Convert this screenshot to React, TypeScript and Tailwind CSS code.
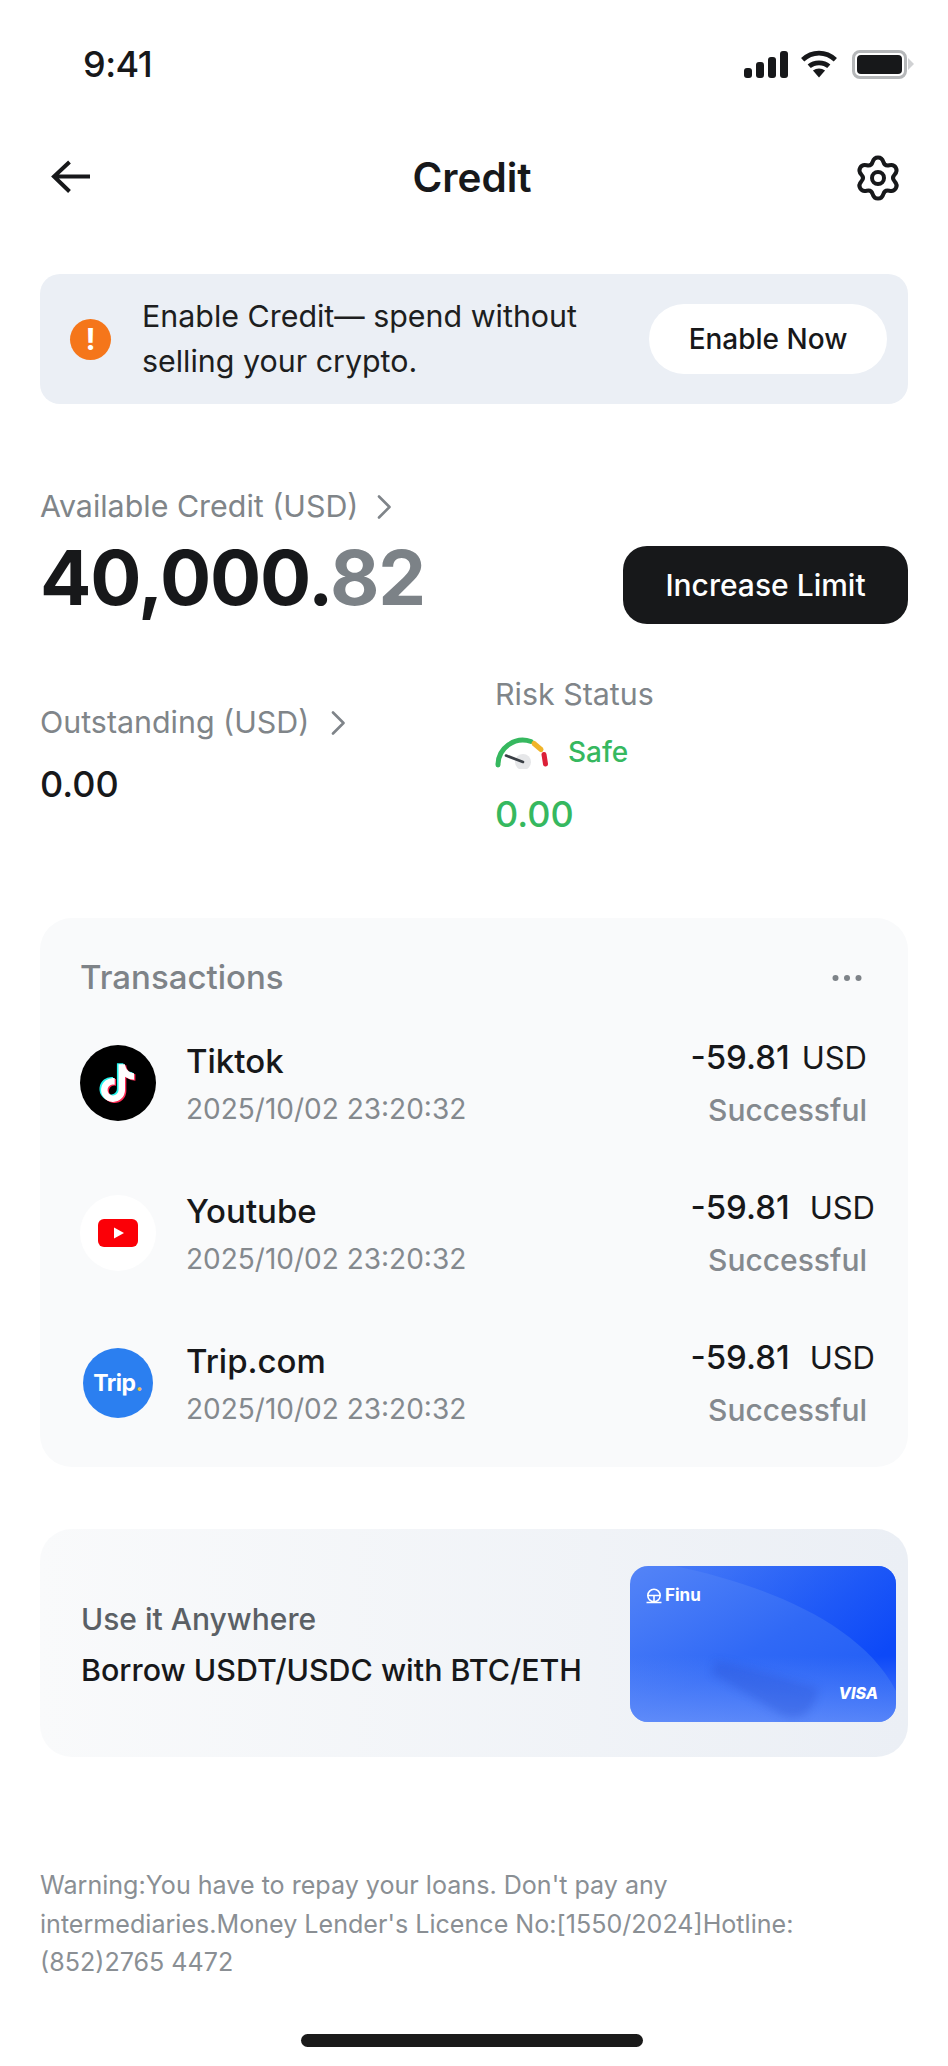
import React from "react";

const tiktokPath =
  "M448,209.91a210.06,210.06,0,0,1-122.77-39.25V349.38A162.55,162.55,0,1,1,185,188.31V278.2a74.62,74.62,0,1,0,52.23,71.18V0l88,0a121.18,121.18,0,0,0,1.86,22.17h0A122.18,122.18,0,0,0,381,102.39a121.43,121.43,0,0,0,67,20.14Z";

// six lobed gear outline: two control points per lobe keep the tips round
const gearPath = (() => {
  const polar = (r: number, deg: number) => {
    const a = (deg * Math.PI) / 180;
    return [23 + r * Math.cos(a), 23 + r * Math.sin(a)];
  };
  const pts: number[][] = [];
  for (let i = 0; i < 6; i++) {
    const c = i * 60 - 90;
    pts.push(polar(21, c - 11), polar(21, c + 11), polar(13.4, c + 30));
  }
  const mid = (a: number[], b: number[]) => [(a[0] + b[0]) / 2, (a[1] + b[1]) / 2];
  const start = mid(pts[pts.length - 1], pts[0]);
  let d = `M${start[0].toFixed(2)} ${start[1].toFixed(2)}`;
  pts.forEach((p, i) => {
    const m = mid(p, pts[(i + 1) % pts.length]);
    d += `Q${p[0].toFixed(2)} ${p[1].toFixed(2)} ${m[0].toFixed(2)} ${m[1].toFixed(2)}`;
  });
  return d + "Z";
})();

const Chevron = () => (
  <svg width="16" height="24" viewBox="0 0 16 24" fill="none" stroke="#7f8489" strokeWidth="2.6" strokeLinecap="round" strokeLinejoin="round">
    <path d="M3 1.5l10.5 10.5L3 22.5" />
  </svg>
);

const StatusIcons = () => (
  <div className="flex items-center">
    <svg width="44" height="27" viewBox="0 0 44 27" fill="#17181a">
      <rect x="0" y="17" width="8" height="10" rx="3" />
      <rect x="12" y="11" width="8" height="16" rx="3" />
      <rect x="24" y="6" width="8" height="21" rx="3" />
      <rect x="36" y="0" width="8" height="27" rx="3" />
    </svg>
    <svg className="ml-[12px]" width="38" height="28" viewBox="0 0 40 30" fill="none" stroke="#17181a" strokeWidth="5">
      <path d="M2.5 10.5C12.5 1 27.5 1 37.5 10.5" />
      <path d="M9.5 17.5C15 12.5 25 12.5 30.5 17.5" />
      <path d="M13.5 22L20 29.5 26.5 22C22.5 19 17.5 19 13.5 22Z" fill="#17181a" stroke="none" />
    </svg>
    <div className="ml-[14px] flex items-center">
      <div className="h-[29px] w-[55px] rounded-[8px] border-[3px] border-[#b5b7b9] p-[2px]">
        <div className="h-full w-full rounded-[4px] bg-[#17181a]" />
      </div>
      <svg className="ml-[1px]" width="6" height="12" viewBox="0 0 6 12" fill="#d0d1d3">
        <path d="M0 0L6 6 0 12Z" />
      </svg>
    </div>
  </div>
);

const Gauge = () => (
  <svg width="56" height="34" viewBox="0 0 56 34" fill="none" strokeLinecap="round">
    <path d="M3 30A25 25 0 0 1 36 6.5" stroke="#36b85f" strokeWidth="5" />
    <path d="M39 8.5L46 14.5" stroke="#f0b429" strokeWidth="5" />
    <path d="M49 19.5L50.5 29" stroke="#dc2038" strokeWidth="5" />
    <circle cx="28" cy="27" r="8" fill="#e6e7e9" />
    <path d="M11 20.5L28 27" stroke="#3a3f45" strokeWidth="2.6" />
  </svg>
);

const TiktokIcon = () => (
  <div className="flex h-[76px] w-[76px] items-center justify-center rounded-full bg-black">
    <svg width="42" height="42" viewBox="-30 -30 520 570">
      <path d={tiktokPath} fill="#25f4ee" transform="translate(-22 -14)" />
      <path d={tiktokPath} fill="#fe2c55" transform="translate(18 14)" />
      <path d={tiktokPath} fill="#ffffff" />
    </svg>
  </div>
);

const YoutubeIcon = () => (
  <div className="flex h-[76px] w-[76px] items-center justify-center rounded-full bg-white">
    <svg width="40" height="28" viewBox="0 0 40 28">
      <rect width="40" height="28" rx="6" fill="#fb0007" />
      <path d="M16 8.5L26 14 16 19.5Z" fill="#ffffff" />
    </svg>
  </div>
);

const TripIcon = () => (
  <div className="flex h-[76px] w-[76px] items-center justify-center">
    <div className="flex h-[70px] w-[70px] items-center justify-center rounded-full bg-[#2b7ff0] pt-[1px]">
      <span className="text-[23px] font-bold tracking-[-0.5px] text-white">
        Trip<span className="text-[#eec04c]">.</span>
      </span>
    </div>
  </div>
);

const rows = [
  { name: "Tiktok", icon: <TiktokIcon />, amountClass: "gap-[12px]" },
  { name: "Youtube", icon: <YoutubeIcon />, amountClass: "gap-[20px] -mr-[8px]" },
  { name: "Trip.com", icon: <TripIcon />, amountClass: "gap-[20px] -mr-[8px]" },
];

const VisaCard = () => (
  <div className="relative mt-[2px] h-[156px] w-[266px] shrink-0 overflow-hidden rounded-[18px] bg-gradient-to-br from-[#5484f7] via-[#3069f6] to-[#1a58f6]">
    <svg className="absolute inset-0" width="266" height="156" viewBox="0 0 266 156" fill="none">
      <defs>
        <linearGradient id="sweep" x1="0" y1="0" x2="1" y2="0.6">
          <stop offset="0" stopColor="#2a63f6" stopOpacity="0.2" />
          <stop offset="1" stopColor="#0d49f8" />
        </linearGradient>
        <linearGradient id="floor" x1="0" y1="0" x2="0" y2="1">
          <stop offset="0" stopColor="#7ea2fb" stopOpacity="0" />
          <stop offset="1" stopColor="#7ea2fb" stopOpacity="0.6" />
        </linearGradient>
        <filter id="soft" x="-20%" y="-20%" width="140%" height="140%">
          <feGaussianBlur stdDeviation="4" />
        </filter>
      </defs>
      <path d="M45 0C130 18 230 55 266 125V0Z" fill="url(#sweep)" />
      <rect x="0" y="90" width="266" height="66" fill="url(#floor)" />
      <path d="M82 108C100 118 130 135 150 148C170 158 185 145 188 122C150 112 110 98 85 95Z" fill="#2c55d6" opacity="0.38" filter="url(#soft)" />
    </svg>
    <div className="relative flex h-full flex-col justify-between pb-[21px] pl-[16px] pr-[18px] pt-[21px]">
      <div className="flex items-center gap-[3px]">
        <svg width="16" height="16" viewBox="0 0 16 16" fill="none" stroke="#ffffff" strokeWidth="1.6">
          <circle cx="8" cy="7.5" r="6.2" />
          <path d="M2 7.5h12M8 7.5v6M0.5 14.5h15" />
        </svg>
        <span className="text-[17px] font-bold leading-none text-white">Finu</span>
      </div>
      <span className="self-end text-[16px] font-extrabold italic leading-none text-white">VISA</span>
    </div>
  </div>
);

export default function App() {
  return (
    <div className="min-h-[2066px] w-[948px] bg-white text-[#17181a]" style={{ fontFamily: '"Inter", "Liberation Sans", sans-serif' }}>
      <div className="flex h-[128px] items-center justify-between pl-[83px] pr-[34px]">
        <span className="text-[36px] font-medium tracking-[-0.5px]">9:41</span>
        <StatusIcons />
      </div>

      <div className="flex h-[100px] items-center justify-between pl-[48px] pr-[47px]">
        <svg width="46" height="36" viewBox="0 0 46 36" fill="none" stroke="#17181a" strokeWidth="4" strokeLinejoin="miter">
          <path d="M42 16.5H6M21.5 2L6 16.5 21.5 31.5" />
        </svg>
        <h1 className="mr-[5px] text-[40.5px] font-semibold">Credit</h1>
        <svg width="46" height="46" viewBox="0 0 46 46" fill="none" stroke="#17181a" strokeWidth="4">
          <path d={gearPath} />
          <circle cx="23" cy="23" r="6" />
        </svg>
      </div>

      <div className="mx-[40px] mt-[46px] flex h-[130px] items-center rounded-[20px] bg-[#ebeff5] pl-[30px] pr-[21px]">
        <div className="flex h-[41px] w-[41px] shrink-0 items-center justify-center rounded-full bg-[#f5761a] text-[30px] font-bold leading-none text-white">!</div>
        <p className="ml-[31px] flex-1 text-[30.4px] leading-[45px] text-[#1d1e20]">
          Enable Credit— spend without
          <br />
          selling your crypto.
        </p>
        <div className="flex h-[70px] w-[238px] items-center justify-center rounded-full bg-white text-[28px] font-medium">Enable Now</div>
      </div>

      <div className="mx-[40px] mt-[83px]">
        <div className="flex h-[40px] items-center gap-[18px] text-[30.4px] text-[#808589]">
          <span>Available Credit (USD)</span>
          <Chevron />
        </div>
        <div className="mt-[19px] flex items-center justify-between">
          <div className="pb-[16px] text-[76px] font-bold leading-[62px] tracking-[-1.2px]">
            40,000.<span className="text-[#7c8287]">82</span>
          </div>
          <div className="flex h-[78px] w-[285px] items-center justify-center rounded-[24px] bg-[#17181a] text-[30px] font-medium text-white">Increase Limit</div>
        </div>
      </div>

      <div className="mx-[40px] mt-[50px] flex">
        <div className="w-[455px] pt-[29px]">
          <div className="flex h-[40px] items-center gap-[21px] text-[30.4px] text-[#808589]">
            <span>Outstanding (USD)</span>
            <Chevron />
          </div>
          <div className="mt-[19px] text-[36px] font-medium leading-[44px]">0.00</div>
        </div>
        <div>
          <div className="h-[40px] text-[30.4px] leading-[40px] text-[#808589]">Risk Status</div>
          <div className="mt-[18px] flex h-[40px] items-center gap-[17px] text-[28px] font-medium text-[#36b85f]">
            <Gauge />
            <span>Safe</span>
          </div>
          <div className="mt-[20px] text-[36px] font-medium leading-[44px] text-[#36b85f]">0.00</div>
        </div>
      </div>

      <div className="mx-[40px] mt-[82px] h-[549px] rounded-[32px] bg-[#f9fafb] pl-[40px] pr-[41px] pt-[39px]">
        <div className="flex h-[42px] items-center justify-between">
          <span className="text-[33px] font-medium text-[#7e8388]">Transactions</span>
          <svg width="30" height="8" viewBox="0 0 30 8" fill="#7e8388" className="mr-[5px]">
            <circle cx="3.5" cy="4" r="3" />
            <circle cx="15" cy="4" r="3" />
            <circle cx="26.5" cy="4" r="3" />
          </svg>
        </div>
        <div className="mt-[46px] flex flex-col gap-[74px]">
          {rows.map((r) => (
            <div key={r.name} className="flex h-[76px] items-center justify-between">
              <div className="flex items-center gap-[30px]">
                {r.icon}
                <div>
                  <div className="text-[33px] font-medium leading-[44px]">{r.name}</div>
                  <div className="mt-[8px] text-[28px] leading-[36px] text-[#84898e]">2025/10/02 23:20:32</div>
                </div>
              </div>
              <div className="flex flex-col items-end">
                <div className={"flex items-baseline text-[#17181a] " + r.amountClass}>
                  <span className="text-[33px] font-medium leading-[42px]">-59.81</span>
                  <span className="text-[31px] leading-[42px]">USD</span>
                </div>
                <div className="mt-[11px] text-[30px] font-medium leading-[40px] text-[#84898e]">Successful</div>
              </div>
            </div>
          ))}
        </div>
      </div>

      <div className="mx-[40px] mt-[62px] flex h-[228px] items-center justify-between rounded-[32px] bg-gradient-to-r from-[#f9fafb] to-[#ebeff5] pl-[41px] pr-[12px]">
        <div className="pt-[3px]">
          <div className="text-[30px] font-medium leading-[40px] text-[#5b6065]">Use it Anywhere</div>
          <div className="mt-[11px] text-[30.4px] font-medium leading-[40px]">Borrow USDT/USDC with BTC/ETH</div>
        </div>
        <VisaCard />
      </div>

      <p className="mx-[40px] mt-[109px] text-[25.1px] leading-[38.5px] text-[#8a8f94]">
        Warning:You have to repay your loans. Don't pay any
        <br />
        intermediaries.Money Lender's Licence No:[1550/2024]Hotline:
        <br />
        (852)2765 4472
      </p>

      <div className="ml-[301px] mt-[52px] h-[13px] w-[342px] rounded-full bg-[#1a1a1a]" />
    </div>
  );
}
